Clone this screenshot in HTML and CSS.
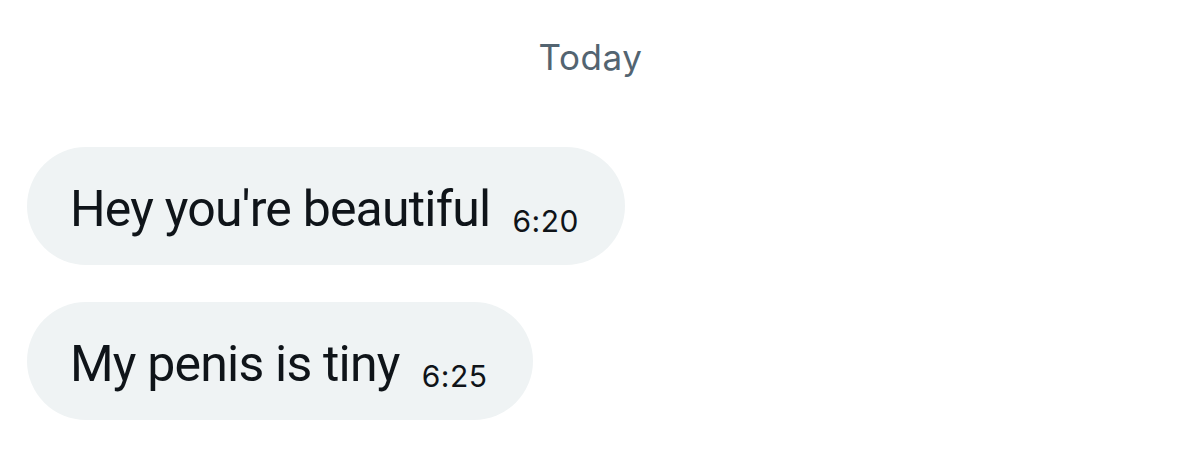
FILE: index.html
```html
<!DOCTYPE html>
<html>
<head>
<meta charset="utf-8">
<link rel="stylesheet" href="styles.css">
</head>
<body>
<div class="chat">
  <div class="day">Today</div>
  <div class="messages">
    <div class="bubble">
      <span class="text">Hey you're beautiful</span>
      <span class="time">6:20</span>
    </div>
    <div class="bubble">
      <span class="text">My penis is tiny</span>
      <span class="time">6:25</span>
    </div>
  </div>
</div>
</body>
</html>
```
FILE: styles.css
```css
html, body {
  margin: 0;
  padding: 0;
  background: #ffffff;
}
body {
  font-family: Roboto, "Liberation Sans", sans-serif;
  width: 1179px;
  height: 471px;
  overflow: hidden;
}
.chat {
  display: flex;
  flex-direction: column;
  padding-top: 34px;
}
.day {
  text-align: center;
  color: #536471;
  font-family: Inter, Roboto, sans-serif;
  font-size: 35px;
  line-height: 46px;
  letter-spacing: 0.6px;
  padding-left: 2px;
}
.messages {
  display: flex;
  flex-direction: column;
  align-items: flex-start;
  gap: 37px;
  padding-left: 27px;
  margin-top: 67px;
}
.bubble {
  display: flex;
  align-items: baseline;
  gap: 22px;
  background: #eff3f4;
  border-radius: 60px;
  height: 118px;
  box-sizing: border-box;
  padding: 6px 46px 0 43px;
  line-height: 112px;
  color: #0f1419;
}
.text {
  font-size: 50px;
  letter-spacing: -0.8px;
}
.time {
  font-family: Inter, Roboto, sans-serif;
  font-size: 30px;
  position: relative;
  top: 6px;
  letter-spacing: 0.5px;
}
```
